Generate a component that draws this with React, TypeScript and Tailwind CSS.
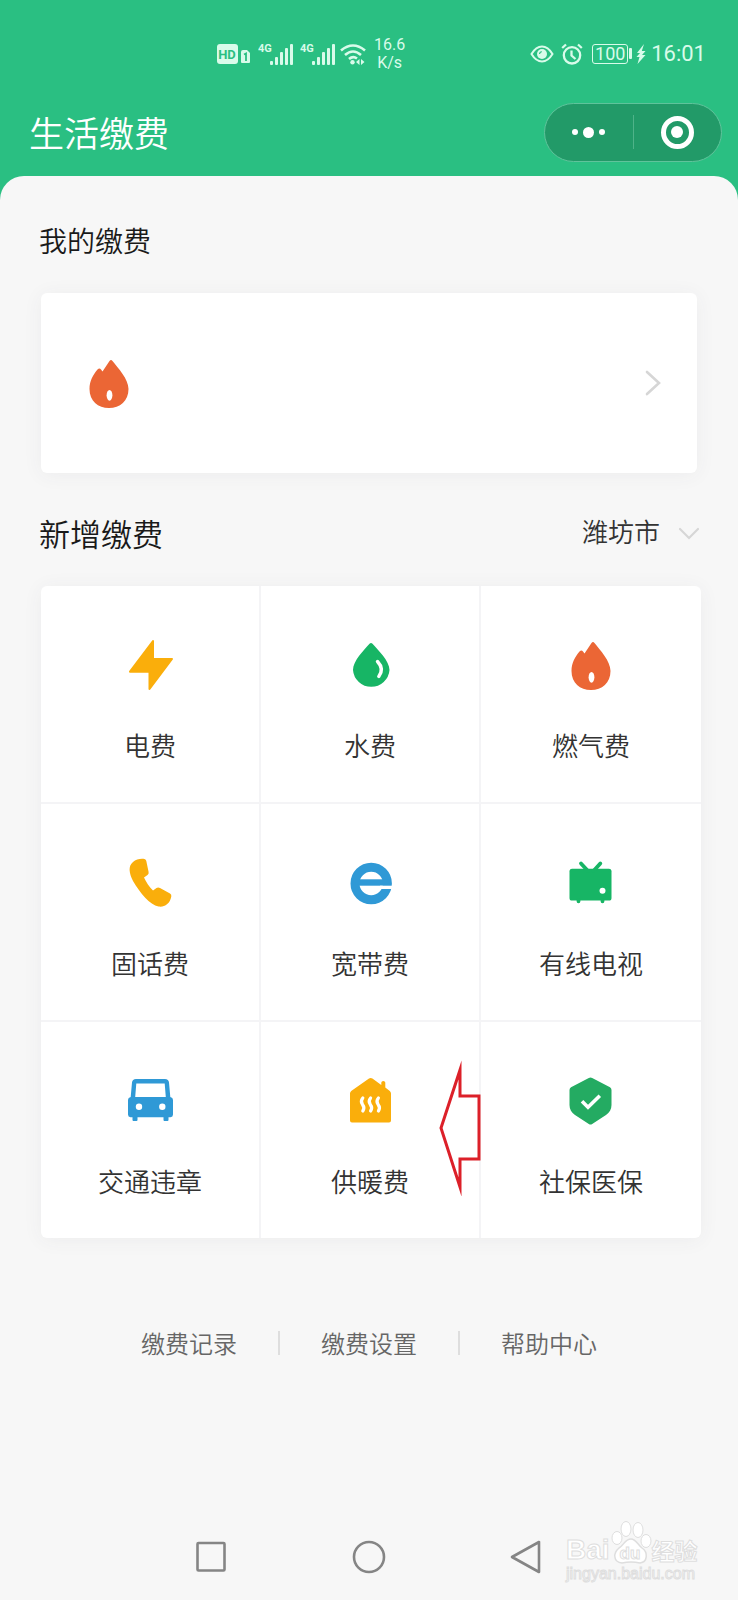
import type { ReactNode } from "react";

const services: { name: string; icon: ReactNode }[] = [
  { name: "电费", icon: <BoltIcon /> },
  { name: "水费", icon: <DropIcon /> },
  { name: "燃气费", icon: <FlameIcon /> },
  { name: "固话费", icon: <PhoneIcon /> },
  { name: "宽带费", icon: <BroadbandIcon /> },
  { name: "有线电视", icon: <TvIcon /> },
  { name: "交通违章", icon: <CarIcon /> },
  { name: "供暖费", icon: <HeatingIcon /> },
  { name: "社保医保", icon: <ShieldIcon /> },
];

const footerLinks = ["缴费记录", "缴费设置", "帮助中心"];

function Icon({ children }: { children: ReactNode }) {
  return (
    <svg viewBox="0 0 60 60" className="w-[60px] h-[60px] shrink-0" fill="none" aria-hidden="true">
      {children}
    </svg>
  );
}

function BoltIcon() {
  return (
    <Icon>
      <path d="M33 6V24H52L29.5 54V36.7H10Z" fill="#faae0b" stroke="#faae0b" strokeWidth="2" strokeLinejoin="round" />
    </Icon>
  );
}

function DropIcon() {
  return (
    <Icon>
      <path d="M29.5 8.8Q31 7.2 32.5 8.8C38 15 49.5 26 49.5 35A18.3 18.2 0 0 1 13 35C13 26 24 15 29.5 8.8Z" fill="#17b565" />
      <path d="M37.5 26.5Q44.5 34 38.8 41.5" stroke="#fff" strokeWidth="3.4" strokeLinecap="round" />
    </Icon>
  );
}

function FlameIcon() {
  return (
    <Icon>
      <path
        d="M30.5 8Q32 6 33.5 8C39 15 49.5 26 49.5 36C49.5 48 41 55 30 55S10.500 48 10.500 36C10.500 28 14 22 18.500 16.500Q20.500 14.500 22 16.500L23.500 18.500Z"
        fill="#eb6635"
      />
      <ellipse cx="30.5" cy="42.3" rx="2.9" ry="5.4" fill="#fff" />
    </Icon>
  );
}

function PhoneIcon() {
  return (
    <Icon>
      <path
        d="M13 9C16 6 21 5.5 24.5 6Q26 6.3 26.3 8L28.6 19Q29 21 27.5 22L24 24.5C26 29 29 33.5 33 37.5L36.5 35Q38 34 40 35L50 40.5Q51.7 41.5 51.3 43.5C50 51 44 54.5 38.5 53.5C30 52 20 40 13 28C9 20 8 13 13 9Z"
        fill="#faae0b"
      />
    </Icon>
  );
}

function BroadbandIcon() {
  return (
    <Icon>
      <circle cx="31.2" cy="30.5" r="16.2" stroke="#2f99d6" strokeWidth="9" />
      <path d="M19 26.3H51V32.7H19Z" fill="#2f99d6" />
      <path d="M40 32.7H53V36H40Z" fill="#fff" />
    </Icon>
  );
}

function TvIcon() {
  return (
    <Icon>
      <rect x="8.5" y="15.7" width="42" height="31.8" rx="2.6" fill="#17b565" />
      <path d="M20 10.5L27 18M39.3 10.5L32.5 18M17.5 47V48.3M41.5 47V48.3" stroke="#17b565" strokeWidth="3.8" strokeLinecap="round" />
      <circle cx="41.5" cy="37.7" r="3" fill="#fff" />
    </Icon>
  );
}

function CarIcon() {
  return (
    <Icon>
      <path
        d="M16 8H45Q48.6 8 49 11.5L50.3 26Q53 26.6 53 29V43.5Q53 46 50.5 46.3H48.5V49Q48.5 50 47.5 50H44.5Q43.5 50 43.5 49V46.3H17.5V49Q17.5 50 16.5 50H13.5Q12.5 50 12.5 49V46.3H10.5Q8 46 8 43.5V29Q8 26.6 10.7 26L12 11.5Q12.4 8 16 8ZM16.3 12.4L15.2 26H45.8L44.7 12.4Z"
        fill="#2f99d6"
        fillRule="evenodd"
      />
      <circle cx="19" cy="35.7" r="3.2" fill="#fff" />
      <circle cx="42.3" cy="35.7" r="3.2" fill="#fff" />
    </Icon>
  );
}

function HeatingIcon() {
  return (
    <Icon>
      <path
        d="M29 7.6Q30.7 6.4 32.4 7.6L41.3 14V11.5Q41.5 10 43.3 10T45.3 11.5V16.6L49.8 20Q51 21 51 22.5V49.5Q51 51.5 49 51.5H12Q10 51.5 10 49.5V22.5Q10 21 11.2 20Z"
        fill="#faae0b"
      />
      <path
        d="M22.8 27Q20 30.3 22.5 33.5T22.8 40M30.6 27Q27.8 30.3 30.3 33.5T30.6 40M38.4 27Q35.6 30.3 38.1 33.5T38.4 40"
        stroke="#fff"
        strokeWidth="3.2"
        strokeLinecap="round"
      />
    </Icon>
  );
}

function ShieldIcon() {
  return (
    <Icon>
      <path
        d="M27.8 7Q29.5 6 31.2 7L49 16.3Q50.5 17.2 50.5 19V34C50.5 38.5 48.5 41.5 45 44L31.2 53Q29.5 54.2 27.8 53L14 44C10.5 41.5 8.5 38.5 8.5 34V19Q8.5 17.2 10 16.3Z"
        fill="#24ab62"
      />
      <path d="M21 30.3L27 36.3L38.8 24.8" stroke="#fff" strokeWidth="3.6" />
    </Icon>
  );
}

function Signal() {
  return (
    <svg viewBox="0 0 36 24" className="w-9 h-6" fill="currentColor" aria-hidden="true">
      <text x="0" y="10" fontSize="11" fontWeight="700" fontFamily="Roboto, sans-serif">4G</text>
      <rect x="12" y="19" width="3" height="4" rx="1" />
      <rect x="17" y="15" width="3" height="8" rx="1" />
      <rect x="22" y="10" width="3" height="13" rx="1" />
      <rect x="27" y="6" width="3" height="17" rx="1" />
      <rect x="32" y="2" width="3" height="21" rx="1" />
    </svg>
  );
}

function StatusBar() {
  return (
    <div className="h-[103px] pt-1 pl-[217px] pr-8 flex items-center justify-between text-[#d9fbea] font-['Roboto',sans-serif]">
      <div className="flex items-center">
        <svg viewBox="0 0 36 24" className="w-9 h-6 mr-[5px]" aria-hidden="true">
          <rect y="2" width="21" height="20" rx="3" fill="currentColor" />
          <text x="10" y="17" textAnchor="middle" fontSize="13" fontWeight="700" fontFamily="Roboto, sans-serif" fill="#2abf82">HD</text>
          <path d="M24 10Q24 8 26 8H30L33 11V20Q33 21 32 21H25Q24 21 24 20Z" fill="currentColor" />
          <path d="M27 12.5L29 11.5V19" stroke="#2abf82" strokeWidth="1.8" fill="none" />
        </svg>
        <div className="flex gap-[6px]">
          <Signal />
          <Signal />
        </div>
        <svg viewBox="0 0 26 24" className="w-[26px] h-6 ml-1" fill="none" stroke="currentColor" strokeWidth="2.6" aria-hidden="true">
          <path d="M1 8.5Q13 -1.5 25 8.5M5 13Q13 6 21 13M9 17Q13 13.5 17 16.5" />
          <circle cx="12.5" cy="20.3" r="2.2" fill="currentColor" stroke="none" />
          <path d="M16 20L19.5 17V23ZM24.5 20L21 17V23Z" fill="currentColor" stroke="none" />
        </svg>
        <div className="ml-2 text-center text-[16px] leading-[18px]">
          16.6
          <br />
          K/s
        </div>
      </div>
      <div className="flex items-center">
        <svg viewBox="0 0 24 20" className="w-6 h-5" fill="none" stroke="currentColor" strokeWidth="2" aria-hidden="true">
          <path d="M1.5 10Q6 2.5 12 2.5T22.5 10Q18 17.5 12 17.5T1.5 10Z" />
          <circle cx="12" cy="10" r="5" fill="currentColor" stroke="none" />
          <path d="M9.5 10Q9.7 8 11.7 7.7" stroke="#2abf82" strokeWidth="1.2" />
        </svg>
        <svg viewBox="0 0 22 22" className="w-[22px] h-[22px] ml-[7px]" fill="none" stroke="currentColor" strokeWidth="2.3" aria-hidden="true">
          <circle cx="11" cy="12.3" r="8.2" />
          <path d="M10.5 7.5V12.5L14.5 16M1.2 5L5 1.5M20.8 5L17 1.5" />
        </svg>
        <div className="ml-[9px] w-[36px] h-[20px] rounded-[3px] border border-current text-center text-[18px] leading-[18px]">100</div>
        <div className="ml-px w-[3px] h-[11px] rounded-[1px] bg-current" />
        <svg viewBox="0 0 10 20" className="w-[10px] h-5 ml-1" fill="currentColor" aria-hidden="true">
          <path d="M8 0L1 9H4L0.5 13H3.5L1.5 20L9.5 11H6L9.5 7H5.8Z" />
        </svg>
        <span className="ml-[5px] text-[22px] leading-6">16:01</span>
      </div>
    </div>
  );
}

function TitleBar() {
  return (
    <div className="h-[58px] mb-[15px] pl-[29px] pr-4 flex items-center justify-between">
      <h1 className="text-white text-[35px] leading-10 font-[350]">生活缴费</h1>
      <div className="w-[178px] h-[59px] rounded-full border border-[#5fc39b] bg-[#229a68] flex items-center">
        <button type="button" aria-label="更多" className="flex-1 flex items-center justify-center gap-[5px]">
          <span className="size-[6px] rounded-full bg-white" />
          <span className="size-[11px] rounded-full bg-white" />
          <span className="size-[6px] rounded-full bg-white" />
        </button>
        <span className="w-px h-[34px] bg-[#4fb389]" />
        <button type="button" aria-label="关闭" className="flex-1 flex items-center justify-center">
          <span className="size-[33px] rounded-full border-[5px] border-white flex items-center justify-center">
            <span className="size-3 rounded-full bg-white" />
          </span>
        </button>
      </div>
    </div>
  );
}

function RedArrow() {
  return (
    <svg viewBox="0 0 46 136" className="absolute top-[38px] -right-1 w-[46px] h-[136px]" fill="none" aria-hidden="true">
      <path d="M4 68L23 10V36H42V99H23V127Z" stroke="#dc2029" strokeWidth="3" strokeMiterlimit="8" />
    </svg>
  );
}

function Watermark() {
  return (
    <div className="absolute right-10 bottom-4 w-[132px] text-white pointer-events-none [-webkit-text-stroke:1px_#dedede]">
      <div className="flex items-end">
        <span className="font-['Liberation_Sans',sans-serif] font-bold text-[28px] leading-7">Bai</span>
        <svg viewBox="0 0 42 44" className="w-[42px] h-11" fill="#fff" stroke="#dedede" aria-hidden="true">
          <ellipse cx="7" cy="18" rx="5" ry="6.5" />
          <ellipse cx="16" cy="9" rx="5" ry="7.5" />
          <ellipse cx="28" cy="10" rx="5" ry="7.5" />
          <ellipse cx="36" cy="21" rx="5" ry="6.5" />
          <path d="M21 19C26 19 28 25 32 28C38 32 38 42 30 43Q21 41 12 43C3 42 3 33 9 28C14 25 15 19 21 19Z" strokeWidth="1.5" />
          <text x="20" y="39" textAnchor="middle" fontSize="17" fontWeight="700" fontFamily="Liberation Sans, sans-serif">du</text>
        </svg>
        <span className="font-bold text-[23px] leading-7">经验</span>
      </div>
      <div className="font-['Liberation_Sans',sans-serif] text-[16px] leading-5">jingyan.baidu.com</div>
    </div>
  );
}

function NavBar() {
  return (
    <nav className="relative mt-auto h-[86px] flex justify-center">
      <div className="w-[471px] h-[86px] grid grid-cols-3 items-center justify-items-center">
        <button type="button" aria-label="最近任务">
          <svg viewBox="0 0 36 36" className="size-9" fill="none" stroke="#858585" strokeWidth="2.6" aria-hidden="true">
            <rect x="3.5" y="4" width="27" height="27.5" rx="1" />
          </svg>
        </button>
        <button type="button" aria-label="主屏幕">
          <svg viewBox="0 0 36 36" className="size-9" fill="none" stroke="#858585" strokeWidth="2.6" aria-hidden="true">
            <circle cx="18" cy="18" r="15" />
          </svg>
        </button>
        <button type="button" aria-label="返回">
          <svg viewBox="0 0 36 36" className="size-9" fill="none" stroke="#858585" strokeWidth="2.6" strokeLinejoin="round" aria-hidden="true">
            <path d="M31 3V33L4 18Z" />
          </svg>
        </button>
      </div>
      <Watermark />
    </nav>
  );
}

export default function App() {
  return (
    <div className="min-h-screen flex flex-col bg-[#2abf82] font-['Noto_Sans_CJK_SC',sans-serif]">
      <header>
        <StatusBar />
        <TitleBar />
      </header>

      <main className="flex-1 flex flex-col rounded-t-[24px] bg-[#f7f7f7] pt-11">
        <h2 className="pl-[39px] text-[28px] leading-10 font-[350] text-[#1a1a1a]">我的缴费</h2>
        <button
          type="button"
          aria-label="燃气费"
          className="mt-[33px] mx-[41px] pl-[38px] pr-[36px] py-[60px] rounded-md bg-white shadow-[0_2px_20px_rgba(60,60,90,0.06)] flex items-center justify-between"
        >
          <FlameIcon />
          <svg viewBox="0 0 16 28" className="w-4 h-7" fill="none" stroke="#d6d6d6" strokeWidth="2.6" strokeLinecap="round" aria-hidden="true">
            <path d="M2 3L14 14L2 25" />
          </svg>
        </button>

        <div className="mt-10 pl-[39px] pr-[38px] flex items-center justify-between">
          <h2 className="text-[31px] leading-10 font-[350] text-[#1a1a1a]">新增缴费</h2>
          <div className="flex items-center gap-[18px]">
            <select
              aria-label="城市"
              className="appearance-none [field-sizing:content] bg-transparent pb-1 text-[26px] leading-9 font-[350] text-[#333]"
            >
              <option>潍坊市</option>
            </select>
            <svg viewBox="0 0 22 14" className="w-[22px] h-[14px]" fill="none" stroke="#d6d6d6" strokeWidth="2.2" strokeLinecap="round" aria-hidden="true">
              <path d="M2 3L11 12L20 3" />
            </svg>
          </div>
        </div>

        <div className="mt-[33px] ml-[41px] mr-[37px] rounded-md bg-white shadow-[0_2px_20px_rgba(60,60,90,0.06)] grid grid-cols-3">
          {services.map((s, i) => (
            <div
              key={s.name}
              className="relative border-[#f4f4f6] border-r-2 border-b-2 nth-[3n]:border-r-0 nth-[n+7]:border-b-0"
            >
              <button type="button" className="w-full pt-[49px] pb-[37px] flex flex-col items-center gap-[30px]">
                {s.icon}
                <span className="text-[26px] leading-10 font-[350] text-[#333]">{s.name}</span>
              </button>
              {i === 7 && <RedArrow />}
            </div>
          ))}
        </div>

        <div className="mt-[93px] flex items-center justify-center divide-x-2 divide-[#dedede]">
          {footerLinks.map((label) => (
            <a key={label} href="#" className="px-[41px] text-[24px] leading-6 font-[350] text-[#666]">
              {label}
            </a>
          ))}
        </div>

        <NavBar />
      </main>
    </div>
  );
}
